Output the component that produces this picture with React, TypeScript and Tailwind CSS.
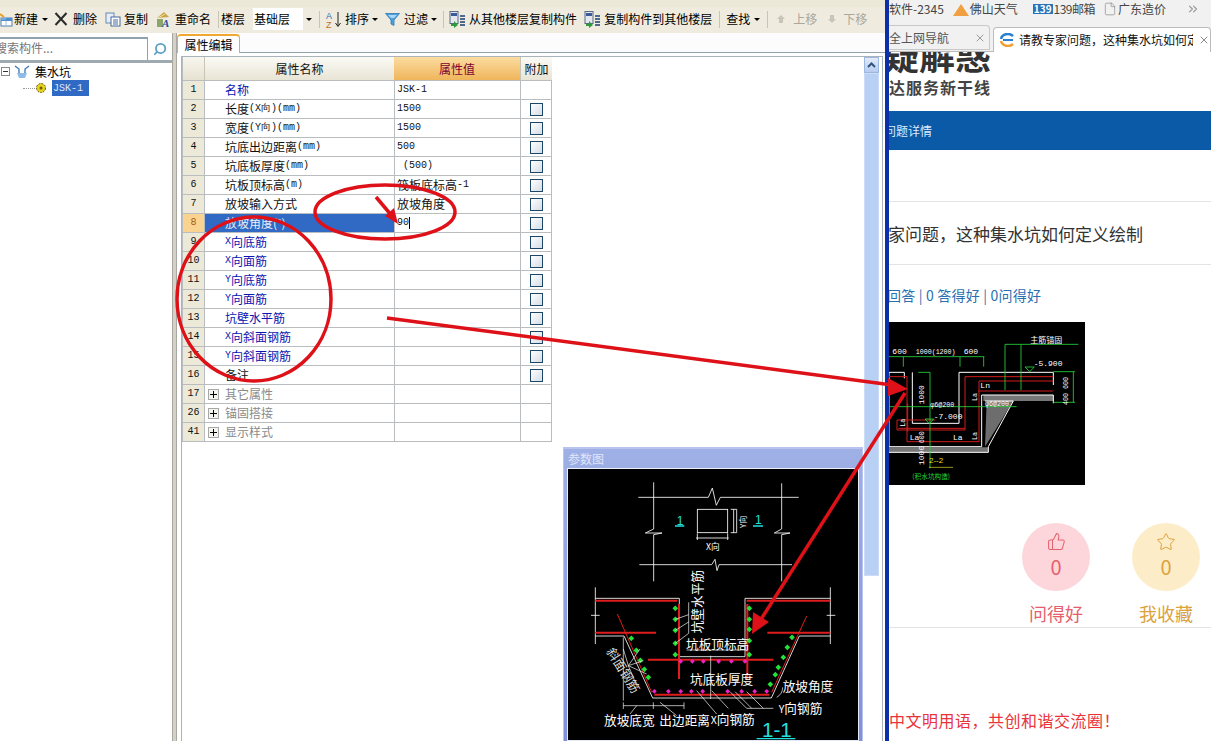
import React from 'react';
import { ThumbsUp, Star, X, Search, ChevronsRight, File } from 'lucide-react';

const L = ({ children }: { children: React.ReactNode }) => (
  <span className="font-['Liberation_Mono',monospace] text-[10px]">{children}</span>
);

const Caret = () => <span className="block w-0 h-0 border-x-[3px] border-x-transparent border-t-[3px] border-t-black" />;
const Sep = () => <span className="block w-px h-[17px] bg-[#c9c5b2]" />;

const Sheet = ({ tone }: { tone: string }) => (
  <svg width="17" height="17" viewBox="0 0 17 17">
    <rect x="1" y="0.500" width="8" height="12" fill="#e4e8ee" stroke="#5a6a80" />
    <rect x="2" y="2" width="6" height="3" fill="#3c5a9a" />
    <path d="M2 13 h3 v-3 l4 4 -4 3 v-2 h-3 z" fill={tone} />
    <path d="M11 5h5M11 8h5M11 11h5M11 14h5" stroke="#4b6a8c" strokeWidth="2" />
  </svg>
);

const Toolbar = () => (
  <div className="h-[26px] pb-[2px] bg-[#efecdf] flex items-center text-[12px] text-black whitespace-nowrap shrink-0">
    <svg width="14" height="16" viewBox="2 0 14 16">
      <rect x="3" y="7" width="11" height="8" fill="#fff" stroke="#4d7fb5" />
      <rect x="3" y="7" width="11" height="3" fill="#4d8fd0" />
      <path d="M3 8h5M8 10v5" stroke="#9cc0e4" />
      <path d="M2 3l4 3" stroke="#e8a020" strokeWidth="2" />
    </svg>
    <span>新建</span>
    <span className="ml-[4px]"><Caret /></span>
    <svg width="14" height="14" viewBox="0 0 14 14" className="ml-[6px]">
      <path d="M1.500 1L12.500 13M12.500 1L1.500 13" stroke="#2b2b2b" strokeWidth="2" />
    </svg>
    <span className="ml-[5px]">删除</span>
    <svg width="16" height="15" viewBox="0 0 16 15" className="ml-[8px]">
      <rect x="1" y="1" width="8" height="10" fill="#e8eef8" stroke="#6a86ad" />
      <rect x="6" y="5" width="9" height="9" fill="#fff" stroke="#46689a" />
      <path d="M8 8h5M8 10h5M8 12h5" stroke="#46689a" />
    </svg>
    <span className="ml-[3px]">复制</span>
    <svg width="16" height="17" viewBox="0 0 16 17" className="ml-[7px]">
      <path d="M2 7l7-6 5 5z" fill="#c9a445" />
      <path d="M3 7l7-4" stroke="#f0e0a0" />
      <rect x="2" y="8" width="6" height="8" fill="#8aa66a" />
      <text x="7" y="16" fontSize="11" fontWeight="700" fontStyle="italic" fill="#2a4f9c" fontFamily="Liberation Serif">A</text>
    </svg>
    <span className="ml-[4px]">重命名</span>
    <span className="ml-[7px]"><Sep /></span>
    <span className="ml-[2px]">楼层</span>
    <span className="ml-[8px] w-[50px] h-[22px] bg-white flex items-center pl-px">基础层</span>
    <span className="ml-[3px]"><Caret /></span>
    <span className="ml-[7px]"><Sep /></span>
    <svg width="17" height="17" viewBox="0 0 17 17" className="ml-[5px]">
      <text x="1" y="8" fontSize="9" fill="#2a6fb5" fontFamily="Liberation Sans">A</text>
      <text x="1" y="16.500" fontSize="9" fill="#c0702a" fontFamily="Liberation Sans">Z</text>
      <path d="M13 1v14M10.500 12l2.500 3.500 2.500-3.500" stroke="#222" fill="none" />
    </svg>
    <span className="ml-[3px]">排序</span>
    <span className="ml-[3px]"><Caret /></span>
    <svg width="15" height="15" viewBox="0 0 15 15" className="ml-[7px]">
      <path d="M0.500 1.500H14.500L9 8V13.500L6 12V8Z" fill="#4f9fdc" stroke="#2a78b0" strokeWidth="0.800" />
      <path d="M3 3h9l-3 3H6z" fill="#a8d6f4" />
    </svg>
    <span className="ml-[4px]">过滤</span>
    <span className="ml-[3px]"><Caret /></span>
    <span className="ml-[6px]"><Sep /></span>
    <span className="ml-[5px]"><Sheet tone="#2f9a3c" /></span>
    <span className="ml-[3px]">从其他楼层复制构件</span>
    <span className="ml-[7px]"><Sheet tone="#2f9a3c" /></span>
    <span className="ml-[3px]">复制构件到其他楼层</span>
    <span className="ml-[7px]"><Sep /></span>
    <span className="ml-[6px]">查找</span>
    <span className="ml-[4px]"><Caret /></span>
    <span className="ml-[7px]"><Sep /></span>
    <svg width="10" height="10" viewBox="0 0 10 10" className="ml-[8px]"><path d="M5 1l4 4H7v4H3V5H1z" fill="#c8c6ba" /></svg>
    <span className="ml-[7px] text-[#a9a79c]">上移</span>
    <svg width="10" height="10" viewBox="0 0 10 10" className="ml-[10px]"><path d="M5 9l4-4H7V1H3v4H1z" fill="#c8c6ba" /></svg>
    <span className="ml-[6px] text-[#a9a79c]">下移</span>
  </div>
);

const TreePanel = () => (
  <div className="w-[172px] shrink-0 bg-white text-[12px] flex flex-col">
    <div className="h-[30px] pt-[4px] flex border-b-[3px] border-[#9fa9b0]">
      <div className="w-[148px] h-[23px] border-t-2 border-r border-[#8fa2ad] flex items-start overflow-hidden text-[#777]">
        <span className="-ml-[5px] leading-[17px]">搜索构件...</span>
      </div>
      <div className="flex-1 flex items-center justify-center">
        <Search size={14} strokeWidth={3} className="text-[#5a9fc4] -scale-x-100" />
      </div>
    </div>
    <div className="flex items-center h-[17px]">
      <span className="ml-[1px] w-[9px] h-[9px] border border-[#888] flex items-center justify-center">
        <span className="w-[5px] h-px bg-[#333]" />
      </span>
      <svg width="16" height="14" viewBox="0 0 16 14" className="ml-[4px]">
        <path d="M1 1l4 3v4M15 1l-4 3v4M5 8q3 2 6 0" fill="none" stroke="#3f74b0" strokeWidth="1.300" />
        <path d="M3 8h10l-2 5H5z" fill="#8fbce6" />
      </svg>
      <span className="ml-[5px]">集水坑</span>
    </div>
    <div className="flex items-center h-[16px]">
      <span className="ml-[23px] w-[12px] border-t border-dotted border-[#999]" />
      <svg width="12" height="12" viewBox="0 0 12 12">
        <circle cx="6" cy="6" r="4.500" fill="#e6d21e" stroke="#6b5c10" strokeDasharray="2 1" />
        <circle cx="6" cy="6" r="1.500" fill="#6b5c10" />
      </svg>
      <span className="ml-[5px] w-[37px] h-[16px] bg-[#316ac5] text-[#dfe8f8] flex items-center pl-px">
        <L>JSK-1</L>
      </span>
    </div>
  </div>
);

type Row = { n: number; name: React.ReactNode; value?: React.ReactNode; blue?: boolean; check?: boolean; group?: boolean; selected?: boolean };

const rows: Row[] = [
  { n: 1, name: '名称', value: <L>JSK-1</L>, blue: true },
  { n: 2, name: <>长度<L>(X向)(mm)</L></>, value: <L>1500</L>, check: true },
  { n: 3, name: <>宽度<L>(Y向)(mm)</L></>, value: <L>1500</L>, check: true },
  { n: 4, name: <>坑底出边距离<L>(mm)</L></>, value: <L>500</L>, check: true },
  { n: 5, name: <>坑底板厚度<L>(mm)</L></>, value: <L>&nbsp;(500)</L>, check: true },
  { n: 6, name: <>坑板顶标高<L>(m)</L></>, value: <>筏板底标高<L>-1</L></>, check: true },
  { n: 7, name: '放坡输入方式', value: '放坡角度', check: true },
  { n: 8, name: '放坡角度(°)', value: <span className="flex items-center"><L>90</L><span className="w-px h-[12px] bg-black" /></span>, check: true, selected: true },
  { n: 9, name: <><L>X</L>向底筋</>, blue: true, check: true },
  { n: 10, name: <><L>X</L>向面筋</>, blue: true, check: true },
  { n: 11, name: <><L>Y</L>向底筋</>, blue: true, check: true },
  { n: 12, name: <><L>Y</L>向面筋</>, blue: true, check: true },
  { n: 13, name: '坑壁水平筋', blue: true, check: true },
  { n: 14, name: <><L>X</L>向斜面钢筋</>, blue: true, check: true },
  { n: 15, name: <><L>Y</L>向斜面钢筋</>, blue: true, check: true },
  { n: 16, name: '备注', check: true },
  { n: 17, name: '其它属性', group: true },
  { n: 26, name: '锚固搭接', group: true },
  { n: 41, name: '显示样式', group: true },
];

const PropertyTable = () => (
  <div className="w-[370px] text-[12px] leading-none text-[#111] border-l border-[#b9bdc0]">
    <div className="flex h-[23px] items-center text-center">
      <div className="w-[21px] h-full bg-gradient-to-b from-[#f8f6ee] to-[#e6e2d2]" />
      <div className="w-[190px] h-full flex items-center justify-center bg-gradient-to-b from-[#fbfaf5] to-[#e8e5d6] border-l border-[#c8c5b6]">属性名称</div>
      <div className="w-[126px] h-full flex items-center justify-center bg-gradient-to-b from-[#fbdc9f] to-[#efb55a] text-[#800030]">属性值</div>
      <div className="flex-1 h-full flex items-center justify-center bg-gradient-to-b from-[#fbfaf5] to-[#e8e5d6] border-l border-[#c8c5b6]">附加</div>
    </div>
    {rows.map(r => (
      <div key={r.n} className="flex h-[19px] border-t border-[#b9bdc0] last:border-b last:h-[20px]">
        <div className={`w-[21px] flex items-center justify-center ${r.selected ? 'bg-[#fbd391] text-[#a06010]' : 'bg-[#ece9d9]'}`}>
          <L>{r.n}</L>
        </div>
        <div className={`w-[190px] flex items-center border-l border-[#b9bdc0] ${r.selected ? 'bg-[#316ac5] text-[#e8eef8]' : r.group ? 'text-[#8a8a8a]' : r.blue ? 'text-[#0a14b0]' : ''} ${r.group ? 'pl-[3px]' : 'pl-[20px]'}`}>
          {r.group && (
            <span className="w-[11px] h-[11px] mr-[6px] border border-[#a8a8a8] bg-[#f5f5f0] flex items-center justify-center relative">
              <span className="w-[7px] h-px bg-black" />
              <span className="absolute w-px h-[7px] bg-black" />
            </span>
          )}
          {r.name}
        </div>
        <div className="w-[126px] flex items-center border-l border-[#b9bdc0] pl-[2px]">{r.value}</div>
        <div className="flex-1 flex items-center justify-center border-x border-[#b9bdc0]">
          {r.check && <span className="w-[13px] h-[13px] border border-[#1d4566] bg-gradient-to-br from-white to-[#d5dde6]" />}
        </div>
      </div>
    ))}
  </div>
);

const ParamDrawing = () => (
  <svg viewBox="24 75 870 813" className="w-[290px] h-[271px] bg-black block">
    <g stroke="#fff" strokeWidth="2.500" fill="none">
      <path d="M235 160H445l12-28 12 52 12-24H716M238 362H455l10-16 6 34 6-18H696" />
      <path d="M281 115V255l-25 12h50l-25 5V412M665 118V255l-22 12h47l-25 5V412" />
      <rect x="412" y="196" width="91" height="70" />
      <path d="M512 196h18v70h-18M521 196v70M408 282h98M412 268v20M503 268v20" />
      <path d="M106 430V600M811 430V600M93 514h26M800 514h26" />
      <path d="M106 463H358V638H555V463H811M106 576H192L278 762H634L718 576H811" />
    </g>
    <g stroke="#e01c1c" strokeWidth="6" fill="none">
      <path d="M106 470H352M560 470H811M106 566H288M622 566H811M264 647H640M283 752H628" />
      <path d="M357 480V705M562 480V705" />
      <path d="M172 510L275 745M740 516L635 745" strokeWidth="3" />
    </g>
    <g fill="#22e23a">
      {[[346, 493], [346, 526], [346, 559], [346, 598], [346, 632], [568, 493], [568, 526], [568, 556], [568, 590], [568, 632], [214, 583], [229, 619], [241, 649], [253, 676], [265, 700], [696, 580], [682, 610], [670, 640], [655, 670], [646, 692], [631, 721]].map(([x, y]) => (
        <rect key={`${x}-${y}`} x={x - 6} y={y - 6} width="12" height="12" transform={`rotate(45 ${x} ${y})`} />
      ))}
    </g>
    <g fill="#f020c8">
      {[362, 397, 430, 476, 514, 555, 283, 325, 362, 394, 428, 503, 545, 584, 620].map((x, i) => (
        <rect key={i} x={x - 5} y={(i < 6 ? 652 : 742) - 5} width="10" height="10" transform={`rotate(45 ${x} ${i < 6 ? 652 : 742})`} />
      ))}
    </g>
    <g stroke="#fff" strokeWidth="2" fill="none">
      <path d="M190 580V770M190 785H372M190 775v20M280 775v20M372 775v20M230 785l-20 25M300 775l50 40" />
      <path d="M346 526l40-14M346 559l40-25M346 598l40-30V475M380 618H560M452 635V765M640 793H560l-50-50M610 793l-50-50M575 793l-50-50M470 810l-60-70M455 740l50 53" />
      <path d="M205 665l-15-50M205 665l35-50M205 665l45-15M205 665l55 25M205 665l25 60M650 760q18-10 18-30" />
    </g>
    <g fill="#fff" fontFamily="'Noto Sans CJK SC', sans-serif" fontSize="38">
      <text x="378" y="616">坑板顶标高</text>
      <text x="390" y="720">坑底板厚度</text>
      <text x="668" y="742">放坡角度</text>
      <text x="656" y="808"><tspan fontSize="32">Y</tspan>向钢筋</text>
      <text x="132" y="844">放坡底宽</text>
      <text x="298" y="844">出边距离</text>
      <text x="452" y="840"><tspan fontSize="32">X</tspan>向钢筋</text>
      <text x="438" y="318" fontSize="26">X向</text>
      <text transform="translate(426 568) rotate(-90)">坑壁水平筋</text>
      <text transform="translate(558 252) rotate(-90)" fontSize="24">Y向</text>
      <text transform="translate(138 622) rotate(58)" fontSize="38" fill="#d8d8d8">斜面钢筋</text>
    </g>
    <g fill="#22e0e0" fontFamily="'Liberation Sans', sans-serif" fontSize="36">
      <text x="350" y="242">1</text>
      <text x="585" y="240">1</text>
      <text x="606" y="878" fontSize="62">1-1</text>
    </g>
    <g stroke="#22e0e0" strokeWidth="4">
      <path d="M345 246h28M579 246h30M590 884h116" />
    </g>
  </svg>
);

const DetailDrawing = () => (
  <svg viewBox="12 21 588 489" className="w-[196px] h-[163px] bg-black block shrink-0">
    <path d="M305 258H385L300 395Z" fill="#6d6d6d" />
    <path d="M12 397H310V412H12ZM295 240H505V258H295Z" fill="#777" />
    <g fill="none" stroke="#fff" strokeWidth="3">
      <path d="M12 172H58V190M12 172V395H290V240H505V265M82 172V325H222V172H505V210" />
      <path d="M12 412H310V395M300 258H385L310 395" />
    </g>
    <g fill="none" stroke="#d01c1c" strokeWidth="3">
      <path d="M12 185H66V380H282V198H505M240 185H505M240 185V345H36V315H150M68 265V350M280 228H505M40 340H240" />
    </g>
    <g fill="none" stroke="#22d83a" strokeWidth="2.500">
      <path d="M12 125H298M55 125v30M225 125v30M296 125v30M360 225V88H580M408 225V88M100 172H135V460M12 275H395M505 170H570M505 262H570M565 170V262" />
      <path d="M120 312h26l-13 14zM420 156h28l-14 14z" />
    </g>
    <g fill="#fff" fontFamily="'Liberation Mono', monospace" fontSize="24">
      <text x="22" y="116">600</text>
      <text x="92" y="116" fontSize="20">1000(1200)</text>
      <text x="236" y="116">600</text>
      <text x="446" y="154" fontSize="24">-5.900</text>
      <text x="146" y="311" fontSize="24">-7.000</text>
      <text x="136" y="275" fontSize="20">φ6@200</text>
      <text x="300" y="272" fontSize="20">φ6@200</text>
      <text x="286" y="218">Ln</text>
      <text x="204" y="375">La</text>
      <text x="74" y="375">La</text>
      <text transform="translate(60 335) rotate(-90)" fontSize="20">La</text>
      <text transform="translate(275 258) rotate(-90)" fontSize="20">La</text>
      <text transform="translate(275 375) rotate(-90)" fontSize="20">La</text>
      <text transform="translate(118 268) rotate(-90)" fontSize="24">1000</text>
      <text transform="translate(118 450) rotate(-90)" fontSize="24">1000</text>
      <text transform="translate(118 385) rotate(-90)" fontSize="20">600</text>
      <text transform="translate(550 270) rotate(-90)" fontSize="20">400 600</text>
      <text x="436" y="84" fontSize="24" fontFamily="'Noto Sans CJK SC', sans-serif">主筋锚固</text>
    </g>
    <text x="132" y="444" fill="#e8e020" fontFamily="'Liberation Sans', sans-serif" fontSize="24">2--2</text>
    <path d="M132 457h72" stroke="#e8e020" strokeWidth="2" />
    <text x="82" y="491" fill="#22d83a" fontFamily="'Noto Sans CJK SC', sans-serif" fontSize="20">(积水坑构造)</text>
  </svg>
);

const Browser = () => (
  <div className="w-[322px] shrink-0 bg-white flex flex-col overflow-hidden">
    <div className="h-[25px] bg-[#f1f1f1] flex items-center text-[12px] text-[#444] whitespace-nowrap shrink-0 pb-[7px]">
      <span>软件-2345</span>
      <span className="ml-[9px] w-[16px] h-[14px] flex items-end justify-center">
        <span className="w-0 h-0 border-x-[8px] border-x-transparent border-b-[12px] border-b-[#f0a040]" />
      </span>
      <span className="ml-[1px]">佛山天气</span>
      <span className="ml-[15px] bg-[#2a72b5] text-white text-[10px] leading-none px-px font-bold">139</span>
      <span className="ml-px tracking-[-0.5px]">139邮箱</span>
      <File size={14} strokeWidth={1} className="ml-[8px] text-[#777]" />
      <span className="ml-[1px]">广东造价</span>
      <ChevronsRight size={14} className="ml-[20px] text-[#999]" />
    </div>
    <div className="h-[27px] bg-[#f1f1f1] flex items-end text-[12px] whitespace-nowrap shrink-0 border-b border-[#bbb] pb-px">
      <div className="w-[103px] h-[25px] border border-l-0 border-[#c8c8c8] rounded-tr flex items-center text-[#555] mr-[3px]">
        <span className="flex-1">全上网导航</span>
        <X size={12} className="mr-[3px] text-[#999]" />
      </div>
      <div className="flex-1 h-[25px] bg-white border border-b-0 border-[#bbb] rounded-t flex items-center -mb-[2px] text-[#111]">
        <svg width="16" height="14" viewBox="0 0 16 14" className="ml-[5px]">
          <path d="M14 3a7 6 0 0 0-12 3" fill="none" stroke="#2a80d0" strokeWidth="2.500" />
          <path d="M2 8a7 6 0 0 0 12 3" fill="none" stroke="#f0a030" strokeWidth="2.500" />
          <path d="M4 7h10" stroke="#2a80d0" strokeWidth="2" />
        </svg>
        <span className="ml-[4px] w-[174px] overflow-hidden">请教专家问题，这种集水坑如何定义绘制</span>
        <X size={12} className="ml-[5px] text-[#888]" />
      </div>
    </div>
    <div className="h-[59px] overflow-hidden shrink-0 font-bold">
      <div className="h-[25px] overflow-hidden text-[#333]">
        <div className="text-[36px] leading-[36px] -mt-[16px] -ml-[6px] whitespace-nowrap">疑解惑</div>
      </div>
      <div className="text-[16px] leading-[20px] tracking-[1px] text-[#444]">达服务新干线</div>
    </div>
    <div className="h-[39px] bg-[#0b5aa8] text-[#dcecff] text-[12px] flex items-center shrink-0 overflow-hidden">
      <span className="-ml-[5px]">问题详情</span>
    </div>
    <div className="h-[52px] shrink-0 border-b border-[#e4e4e4]" />
    <div className="h-[63px] pt-[2px] shrink-0 border-b border-[#e4e4e4] flex items-center text-[17px] text-[#333] whitespace-nowrap overflow-hidden">
      <span className="-ml-[1px]">家问题，这种集水坑如何定义绘制</span>
    </div>
    <div className="h-[57px] pt-[20px] shrink-0 text-[14px] leading-[20px] text-[#2a6fb0] whitespace-nowrap overflow-hidden tracking-[0.2px]">
      <span className="-ml-[2px]">回答 | 0 答得好 | 0问得好</span>
    </div>
    <DetailDrawing />
    <div className="h-[143px] shrink-0 border-b border-[#e4e4e4] flex pl-[133px] gap-[42px] pt-[38px]">
      <div className="w-[68px] flex flex-col items-center text-[#e5606c]">
        <div className="w-[68px] h-[68px] rounded-full bg-[#fdd6dc] flex flex-col items-center pt-[9px]">
          <ThumbsUp size={19} strokeWidth={1.300} />
          <span className="text-[20px] leading-[26px] mt-[3px]">0</span>
        </div>
        <span className="mt-[10px] text-[18px] leading-[24px] whitespace-nowrap">问得好</span>
      </div>
      <div className="w-[68px] flex flex-col items-center text-[#dca23c]">
        <div className="w-[68px] h-[68px] rounded-full bg-[#fdecc8] flex flex-col items-center pt-[9px]">
          <Star size={20} strokeWidth={1.200} />
          <span className="text-[20px] leading-[26px] mt-[2px]">0</span>
        </div>
        <span className="mt-[10px] text-[18px] leading-[24px] whitespace-nowrap">我收藏</span>
      </div>
    </div>
    <div className="pt-[81px] text-[16px] leading-[22px] tracking-[0.5px] text-[#e8323c] whitespace-nowrap">中文明用语，共创和谐交流圈！</div>
  </div>
);

export default function App() {
  return (
    <div className="relative w-[1211px] h-[741px] overflow-hidden flex bg-white font-['Noto_Sans_CJK_SC','Noto_Sans',sans-serif]">
      <div className="w-[885px] shrink-0 flex flex-col">
        <div className="h-[7px] bg-[#ece8d8] shrink-0" />
        <Toolbar />
        <div className="flex flex-1 min-h-0">
          <TreePanel />
          <div className="w-[5px] bg-[#d4d2c8] border-x border-[#a8a8a0] shrink-0" />
          <div className="flex-1 flex flex-col min-w-0 text-[12px]">
            <div className="h-[20px] shrink-0 border-b border-[#8fa2ad] bg-[#fcfcfc] flex items-end">
              <div className="w-[63px] h-[19px] bg-white border border-b-0 border-[#a8b4bc] border-t-2 border-t-[#f0a830] rounded-t-sm flex items-center justify-center -mb-px">属性编辑</div>
            </div>
            <div className="flex-1 flex mt-[3px] ml-[4px] mr-[2px] border-l border-t border-r border-[#a8b4bc] min-h-0">
              <div className="flex-1 min-w-0 bg-white">
                <PropertyTable />
              </div>
              <div className="w-[15px] mr-[3px] flex flex-col shrink-0">
                <div className="h-[16px] bg-gradient-to-b from-[#e2ecfb] to-[#b6ccf0] border border-[#9db8e0] flex items-center justify-center">
                  <svg width="9" height="6" viewBox="0 0 9 6"><path d="M1 5l3.500-3.500L8 5" fill="none" stroke="#33537d" strokeWidth="2" /></svg>
                </div>
                <div className="h-[503px] bg-[#b9d0f5] border border-[#cddcf6]" />
              </div>
            </div>
          </div>
        </div>
      </div>
      <div className="w-[4px] shrink-0 bg-[#0a2fa8]" />
      <Browser />

      {/* floating 参数图 window */}
      <div className="absolute left-[563px] top-[447px] w-[300px] h-[294px] bg-gradient-to-b from-[#9fb0e6] to-[#7f90d8] border-t-2 border-x border-[#b8c4ee] px-[4px]">
        <div className="h-[20px] flex items-center text-[12px] text-[#dfe6f8]">参数图</div>
        <div className="outline outline-1 outline-white/80">
          <ParamDrawing />
        </div>
      </div>

      {/* red annotations on top of the screenshot */}
      <svg className="absolute inset-0 pointer-events-none" width="1211" height="741">
        <g fill="none" stroke="#de1018" strokeWidth="3.500">
          <ellipse cx="254" cy="299" rx="77" ry="82" />
          <ellipse cx="385" cy="212" rx="70" ry="27" />
          <path d="M376 197L392 216" />
          <path d="M387 318L892 385" />
          <path d="M905 393L758 624" />
        </g>
        <path d="M398 224L385 216L394 208Z" fill="#de1018" />
        <path d="M908 389L888 378L888 396Z" fill="#de1018" />
        <path d="M752 634L753 612L769 622Z" fill="#de1018" />
      </svg>
    </div>
  );
}
